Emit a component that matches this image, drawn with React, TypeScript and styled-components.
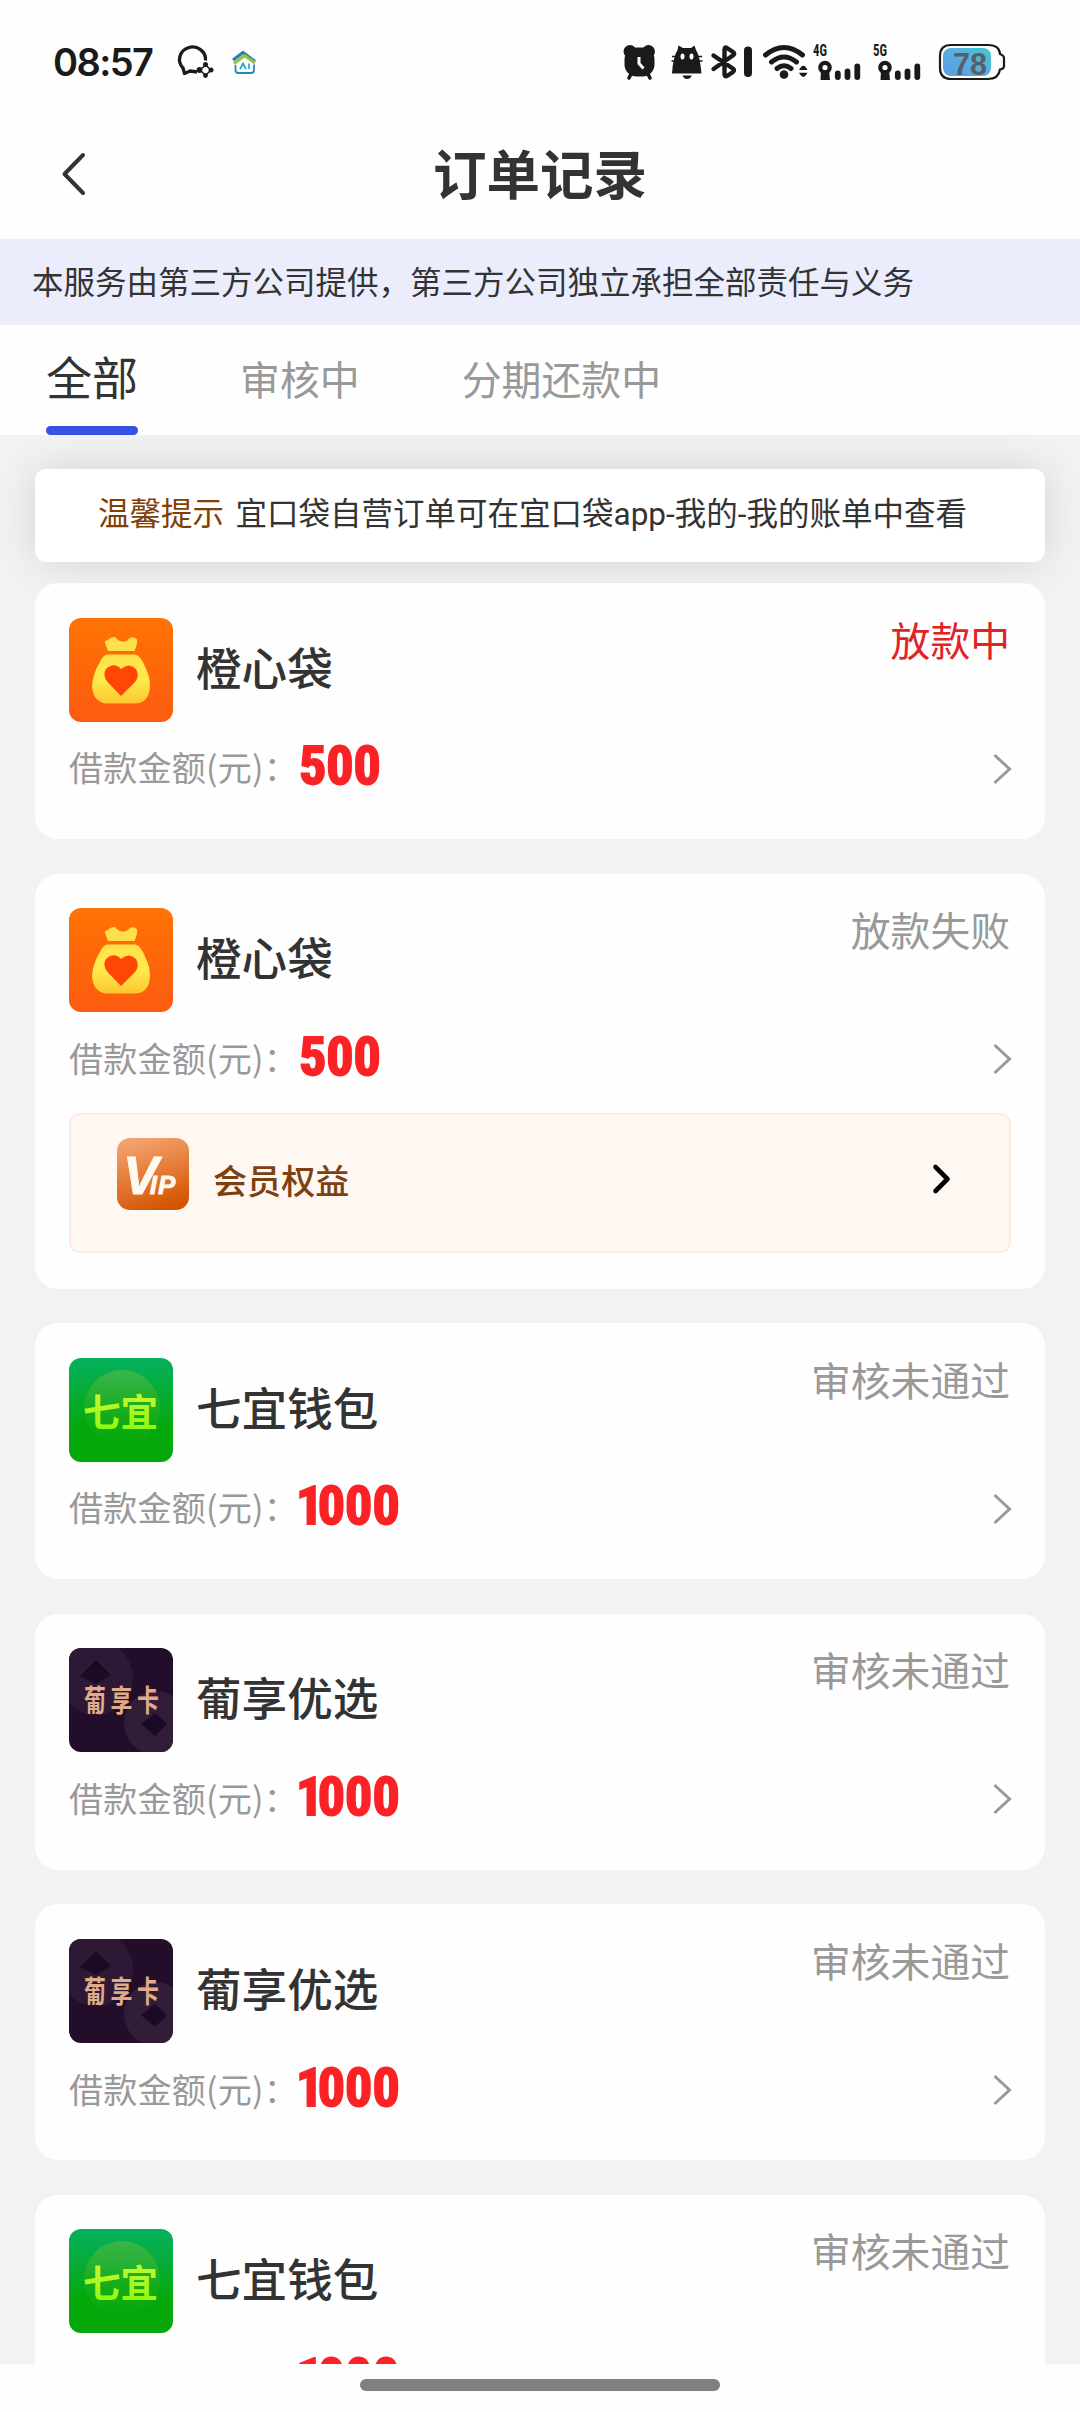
import React from 'react';
import styled, { createGlobalStyle } from 'styled-components';

const sans = `'Noto Sans CJK SC', 'Noto Sans', sans-serif`;

const GlobalStyle = createGlobalStyle`
  *, *::before, *::after { box-sizing: border-box; }
  html, body { margin: 0; padding: 0; background: #fefefe; }
  body { overflow: hidden; }
`;

const Screen = styled.div`
  width: 1080px;
  height: 2412px;
  display: flex;
  flex-direction: column;
  overflow: hidden;
  background: #fefefe;
  font-family: ${sans};
  color: #333;
`;

const StatusBar = styled.div`
  height: 110px;
  flex: none;
  display: flex;
  justify-content: space-between;
  padding: 37px 74px 0 53px;
`;

const StatusGroup = styled.div`
  display: flex;
  height: 50px;
`;

const Clock = styled.span`
  width: 122px;
  font: 600 38px/50px Inter, sans-serif;
  letter-spacing: -1.6px;
  color: #1a1a1a;
`;

const NavBar = styled.header`
  height: 129px;
  flex: none;
  display: grid;
  grid-template-columns: 160px 1fr 160px;
  align-items: center;
  padding-bottom: 1px;
`;

const BackButton = styled.button`
  border: 0;
  background: none;
  padding: 0 0 0 58px;
  height: 60px;
  display: flex;
  align-items: center;
`;

const Title = styled.h1`
  margin: 0 0 4px;
  text-align: center;
  font-size: 53.5px;
  line-height: 80px;
  font-weight: 700;
`;

const Banner = styled.div`
  height: 86px;
  flex: none;
  padding: 0 32px;
  background: #ebedfd;
  font-size: 31.5px;
  line-height: 83px;
  white-space: nowrap;
`;

const Tabs = styled.nav`
  height: 110px;
  flex: none;
  display: flex;
  gap: 102px;
  padding: 0 46px;
`;

const Tab = styled.div<{ $active?: boolean }>`
  height: 110px;
  font-size: ${(p) => (p.$active ? 46 : 39.9)}px;
  line-height: ${(p) => (p.$active ? 100 : 106)}px;
  color: ${(p) => (p.$active ? '#333' : '#999')};
  display: flex;
  flex-direction: column;
  justify-content: space-between;
  &::after {
    content: '';
    height: 9px;
    flex: none;
    margin-top: -8px;
    border-radius: 5px;
    background: ${(p) => (p.$active ? '#3552e4' : 'transparent')};
  }
`;

const Content = styled.main`
  height: 1929px;
  flex: none;
  overflow: hidden;
  background: #f2f2f2;
  padding: 34px 35px 0;
`;

const Notice = styled.div`
  height: 93px;
  margin-bottom: 21px;
  padding: 0 63px;
  border-radius: 11px;
  background: #fff;
  box-shadow: 0 0 40px rgba(0, 0, 0, 0.13);
  display: flex;
  gap: 11.5px;
  font-family: Roboto, ${sans};
  font-size: 31.5px;
  line-height: 91px;
  white-space: nowrap;
`;

const NoticeLabel = styled.span`
  color: #7f3f06;
`;

const Card = styled.article`
  margin-bottom: 34.6px;
  padding: 34.6px 34px 35.1px 34px;
  border-radius: 23px;
  background: #fefefe;
`;

const CardHead = styled.div`
  display: flex;
  height: 104px;
`;

const Name = styled.h2`
  flex: 1;
  margin: 0 0 0 23px;
  font-size: 45.6px;
  line-height: 97px;
  font-weight: 500;
`;

const State = styled.span<{ $accent?: boolean }>`
  margin-right: 1px;
  font-size: 39.8px;
  line-height: 41px;
  color: ${(p) => (p.$accent ? '#e32226' : '#999')};
`;

const AmountRow = styled.div`
  display: flex;
  align-items: center;
  height: 82.3px;
  padding-top: 7px;
`;

const AmountLabel = styled.span`
  width: 230px;
  font-size: 34.1px;
  letter-spacing: 0.2px;
  line-height: 48px;
  color: #999;
  white-space: nowrap;
`;

const Amount = styled.strong`
  flex: 1;
  height: 56px;
  font: 700 54px/56px 'Liberation Sans Narrow', 'Roboto Condensed', Roboto, sans-serif;
  -webkit-text-stroke: 1.8px #fb2226;
  color: #fb2226;
`;

const NarrowDigit = styled.span`
  margin-left: -3px;
  letter-spacing: -5.5px;
`;

const RowArrow = styled.div`
  height: 34px;
  margin: 5px -1px 0 0;
  svg { display: block; }
`;

const VipBox = styled.div`
  height: 140px;
  margin-top: 19px;
  padding: 23px 57px 0 46px;
  border: 2px solid #fdeae0;
  border-radius: 11px;
  background: #fff7f1;
  display: flex;
`;

const VipText = styled.span`
  flex: 1;
  margin-left: 24px;
  font-size: 34.1px;
  line-height: 82px;
  font-weight: 500;
  color: #7d4010;
`;

const VipArrow = styled.div`
  height: 81px;
  display: flex;
  align-items: center;
`;

const HomeArea = styled.footer`
  flex: 1;
  padding-top: 15px;
  display: flex;
  justify-content: center;
`;

const HomeBar = styled.div`
  width: 360px;
  height: 12px;
  border-radius: 6px;
  background: #808080;
`;

const Tile = styled.div`
  width: 104px;
  height: 104px;
  flex: none;
  border-radius: 12px;
  overflow: hidden;
  svg { display: block; }
`;

const ink = '#1a1a1a';

function LeftIcons() {
  return (
    <svg width="100" height="50" viewBox="175 37 100 50" fill="none">
      <path d="M205.500 60.500 A13 12.500 0 1 0 183 68 L184.500 73.500 L190 71 L197 72" stroke={ink} strokeWidth="3.300" strokeLinejoin="round" />
      <path d="M205.500 65 L211 70 L205.500 75.500 L200 70 Z" stroke={ink} strokeWidth="1.500" />
      <circle cx="205.500" cy="64.500" r="2.500" fill={ink} />
      <circle cx="211" cy="70" r="2.500" fill={ink} />
      <circle cx="205.500" cy="75.500" r="2.400" fill={ink} />
      <circle cx="199.500" cy="70" r="2.900" fill={ink} />
      <path d="M233 60 L243 52.500 L255 61.500" stroke="#2a7db4" strokeWidth="3.200" strokeLinejoin="round" />
      <path d="M234 63.500 L244.500 55.500 L255 63" stroke="#8fc63d" strokeWidth="3.200" strokeLinejoin="round" />
      <path d="M235.500 65 V70 Q235.500 73 238.500 73 H251 Q254 73 254 70 V64.500" stroke="#2687bd" strokeWidth="1.800" />
      <path d="M240 69 L243 63.500 L246 69 M249 63.500 V69" stroke="#2da0d0" strokeWidth="1.700" />
    </svg>
  );
}

const NetLabel = ({ x, children }: { x: number; children: string }) => (
  <text x={x} y="56" fontFamily="'Liberation Sans Narrow', 'Roboto Condensed', Roboto, sans-serif" fontWeight="700" fontSize="17" textLength="14" lengthAdjust="spacingAndGlyphs" fill={ink}>{children}</text>
);

const Signal = ({ x }: { x: number }) => (
  <g transform={`translate(${x} 0)`}>
    <circle cx="6.500" cy="67.500" r="4.700" stroke={ink} strokeWidth="4.200" />
    <path d="M2.500 70 H10.500 L11.500 80 H2 Z" fill={ink} />
    <path d="M19.300 73.500 V77 M29 71.500 V77 M38.800 66.500 V77" stroke={ink} strokeWidth="5.800" strokeLinecap="round" />
  </g>
);

function RightIcons() {
  return (
    <svg width="385" height="50" viewBox="621 37 385 50" fill="none">
      <circle cx="630" cy="51.500" r="6.500" fill={ink} />
      <circle cx="648.500" cy="51.500" r="6.500" fill={ink} />
      <rect x="624.500" y="47.500" width="30" height="29" rx="12" fill={ink} />
      <path d="M631 74 L629 78 M648 74 L650 78" stroke={ink} strokeWidth="3.600" strokeLinecap="round" />
      <path d="M639 57 V63.500 L643.500 68.500" stroke="#fff" strokeWidth="3" />
      <path d="M678.500 45.500 L683 48 H691 L694.500 45.500 L696 50 Q700 56 701.500 73.500 H672 Q673 57 677.500 50 Z" fill={ink} />
      <path d="M682.500 75.500 H692 Q690 79 687 79 Q684 79 682.500 75.500Z" fill={ink} />
      <ellipse cx="682.500" cy="56.500" rx="2" ry="3" fill="#fff" />
      <ellipse cx="691.500" cy="56.500" rx="2" ry="3" fill="#fff" />
      <path d="M672 56.500 H677 M671.500 61 H677 M697 56.500 H702 M697 61 H702.500" stroke={ink} strokeWidth="1.600" />
      <path d="M713.500 55.500 L733.500 69 Q734.500 70.500 733 72 L727 76 Q724.500 77 724.500 74 V50 Q724.500 46.500 727 48 L733 52 Q735 53.500 733.500 55 L713.500 69" stroke={ink} strokeWidth="4.400" strokeLinecap="round" strokeLinejoin="round" />
      <path d="M748 50.500 V73" stroke={ink} strokeWidth="8" strokeLinecap="round" />
      <path d="M765.500 55 Q784 40 802.500 55 M771.500 62 Q784 52 796.500 62 M777 68.500 Q784 63 791 68.500" stroke={ink} strokeWidth="5" strokeLinecap="round" />
      <circle cx="784" cy="74.500" r="4.300" fill={ink} />
      <path d="M799 70 Q803.500 61.500 807.500 70Z M799 72.800 Q803.500 81 807.500 72.800Z" fill={ink} />
      <NetLabel x={813}>4G</NetLabel>
      <NetLabel x={873}>5G</NetLabel>
      <Signal x={818.5} />
      <Signal x={878.5} />
      <rect x="943" y="48" width="48" height="28" rx="8" fill="url(#battery)" />
      <path d="M951 45 H988 Q999.500 45 1000 54 Q1004 55.500 1004 58 V66 Q1004 69 1000 69.500 Q998.500 79 988 79 H951 Q940 79 940 68 V56 Q940 45 951 45Z" stroke={ink} strokeWidth="2.200" />
      <text x="953" y="74.500" fontFamily="'Liberation Sans', sans-serif" fontWeight="700" fontSize="31" textLength="34" lengthAdjust="spacingAndGlyphs" fill="#55606a">78</text>
      <defs>
        <linearGradient id="battery" x1="0" y1="1" x2="1" y2="0">
          <stop offset="0" stopColor="#5a9de0" />
          <stop offset=".5" stopColor="#58aede" />
          <stop offset="1" stopColor="#43c8cc" />
        </linearGradient>
      </defs>
    </svg>
  );
}

function BagLogo() {
  return (
    <svg width="104" height="104" viewBox="0 0 104 104">
      <defs>
        <linearGradient id="bagBg" x1="0" y1="0" x2="0" y2="1"><stop offset="0" stopColor="#ff7303" /><stop offset="1" stopColor="#fc5b10" /></linearGradient>
        <linearGradient id="bagFill" x1="0" y1="0" x2="0" y2="1"><stop offset="0" stopColor="#ffe14a" /><stop offset=".5" stopColor="#ffec4e" /><stop offset="1" stopColor="#fdc62e" /></linearGradient>
      </defs>
      <rect width="104" height="104" fill="url(#bagBg)" />
      <path d="M39 33 L36 25 Q35 22.500 39 22 Q41 19 46 19 Q50 24 55 23.500 Q58 23.500 61 20 Q65 18 68 21.500 Q69 24 65.500 33Z" fill="#ffe04a" />
      <path d="M38 36.500 H66 Q72 37 77 51 Q81 59 81 68 Q80 85 67 85.500 H37 Q24 84 23 68 Q24 55 31 44 Q34 37 38 36.500Z" fill="url(#bagFill)" />
      <path d="M52 78 L38.500 64 Q33 57 37 51 Q45 43.500 52 51 Q60 44 67 51 Q71 58 66 64Z" fill="#ff4605" />
    </svg>
  );
}

function QiyiLogo() {
  return (
    <svg width="104" height="104" viewBox="0 0 104 104">
      <defs>
        <linearGradient id="qyBg" x1="0" y1="0" x2="0" y2="1"><stop offset="0" stopColor="#06b05e" /><stop offset=".7" stopColor="#04a80a" /><stop offset="1" stopColor="#05a80a" /></linearGradient>
        <linearGradient id="qyOrb" x1="0" y1="0" x2="0" y2="1"><stop offset="0" stopColor="#39b54c" /><stop offset=".6" stopColor="#14ac18" /><stop offset="1" stopColor="#05a80a" /></linearGradient>
        <linearGradient id="qyText" x1="0" y1="0" x2="0" y2="1"><stop offset="0" stopColor="#d8f53c" /><stop offset="1" stopColor="#86fb0a" /></linearGradient>
      </defs>
      <rect width="104" height="104" fill="url(#qyBg)" />
      <circle cx="53" cy="50" r="38" fill="url(#qyOrb)" />
      <text x="14" y="67.500" fontFamily={sans} fontSize="37.500" fontWeight="700" textLength="75" fill="url(#qyText)">七宜</text>
    </svg>
  );
}

function PuxiangLogo() {
  return (
    <svg width="104" height="104" viewBox="0 0 104 104">
      <rect width="104" height="104" fill="#220e2a" />
      <circle cx="27" cy="30" r="37" fill="#2d1936" />
      <circle cx="87" cy="75" r="32" fill="#321d38" />
      <path d="M27 12 L42 27 L27 36 L11 28Z M86 65 L98 76 L86 88 L72 76Z" fill="#1b0a24" />
      <text transform="translate(15 62.500) scale(.840 1.140)" fontFamily={sans} fontSize="26" fontWeight="700" letterSpacing="5.500" fill="#e0ab88">葡享卡</text>
    </svg>
  );
}

function VipLogo() {
  return (
    <svg width="72" height="72" viewBox="0 0 72 72">
      <defs>
        <linearGradient id="vipBg" x1=".3" y1="0" x2=".6" y2="1"><stop offset="0" stopColor="#f4a36f" /><stop offset="1" stopColor="#d35400" /></linearGradient>
      </defs>
      <rect width="72" height="72" rx="13" fill="url(#vipBg)" />
      <text x="6" y="55.500" fill="#fff9f0" stroke="#fff9f0" strokeWidth=".8" fontFamily="'Liberation Sans', sans-serif" fontWeight="700" fontStyle="italic" fontSize="53">
        V<tspan dx="-8.500" fontSize="26" letterSpacing="1">IP</tspan>
      </text>
    </svg>
  );
}

const Chevron = () => (
  <svg width="20" height="34" viewBox="0 0 20 34" fill="none">
    <path d="M2.500 3 L17.500 17 L2.500 31" stroke="#999" strokeWidth="3" />
  </svg>
);

const logos = { bag: BagLogo, qiyi: QiyiLogo, puxiang: PuxiangLogo };

type Order = { logo: keyof typeof logos; name: string; state: string; amount: number; accent?: boolean; vip?: boolean };

const orders: Order[] = [
  { logo: 'bag', name: '橙心袋', state: '放款中', amount: 500, accent: true },
  { logo: 'bag', name: '橙心袋', state: '放款失败', amount: 500, vip: true },
  { logo: 'qiyi', name: '七宜钱包', state: '审核未通过', amount: 1000 },
  { logo: 'puxiang', name: '葡享优选', state: '审核未通过', amount: 1000 },
  { logo: 'puxiang', name: '葡享优选', state: '审核未通过', amount: 1000 },
  { logo: 'qiyi', name: '七宜钱包', state: '审核未通过', amount: 1000 },
];

function OrderCard({ order }: { order: Order }) {
  const Logo = logos[order.logo];
  const digits = String(order.amount).split('');
  return (
    <Card>
      <CardHead>
        <Tile><Logo /></Tile>
        <Name>{order.name}</Name>
        <State $accent={order.accent}>{order.state}</State>
      </CardHead>
      <AmountRow>
        <AmountLabel>借款金额(元)：</AmountLabel>
        <Amount>
          {digits.map((d, i) => (d === '1' ? <NarrowDigit key={i}>1</NarrowDigit> : d))}
        </Amount>
        <RowArrow><Chevron /></RowArrow>
      </AmountRow>
      {order.vip && (
        <VipBox>
          <VipLogo />
          <VipText>会员权益</VipText>
          <VipArrow>
            <svg width="20" height="32" viewBox="0 0 20 32" fill="none">
              <path d="M3.500 4 L15.500 16 L3.500 28" stroke="#000" strokeWidth="4.600" strokeLinecap="round" strokeLinejoin="round" />
            </svg>
          </VipArrow>
        </VipBox>
      )}
    </Card>
  );
}

export default function App() {
  return (
    <Screen>
      <GlobalStyle />
      <StatusBar>
        <StatusGroup><Clock>08:57</Clock><LeftIcons /></StatusGroup>
        <StatusGroup><RightIcons /></StatusGroup>
      </StatusBar>
      <NavBar>
        <BackButton aria-label="返回">
          <svg width="32" height="48" viewBox="0 0 32 48" fill="none">
            <path d="M25 5 L6.500 24 L25 43" stroke="#333" strokeWidth="4" strokeLinecap="round" strokeLinejoin="round" />
          </svg>
        </BackButton>
        <Title>订单记录</Title>
      </NavBar>
      <Banner>本服务由第三方公司提供，第三方公司独立承担全部责任与义务</Banner>
      <Tabs>
        <Tab $active>全部</Tab>
        <Tab>审核中</Tab>
        <Tab>分期还款中</Tab>
      </Tabs>
      <Content>
        <Notice>
          <NoticeLabel>温馨提示</NoticeLabel>
          <span>宜口袋自营订单可在宜口袋app-我的-我的账单中查看</span>
        </Notice>
        {orders.map((o, i) => <OrderCard key={i} order={o} />)}
      </Content>
      <HomeArea><HomeBar /></HomeArea>
    </Screen>
  );
}
